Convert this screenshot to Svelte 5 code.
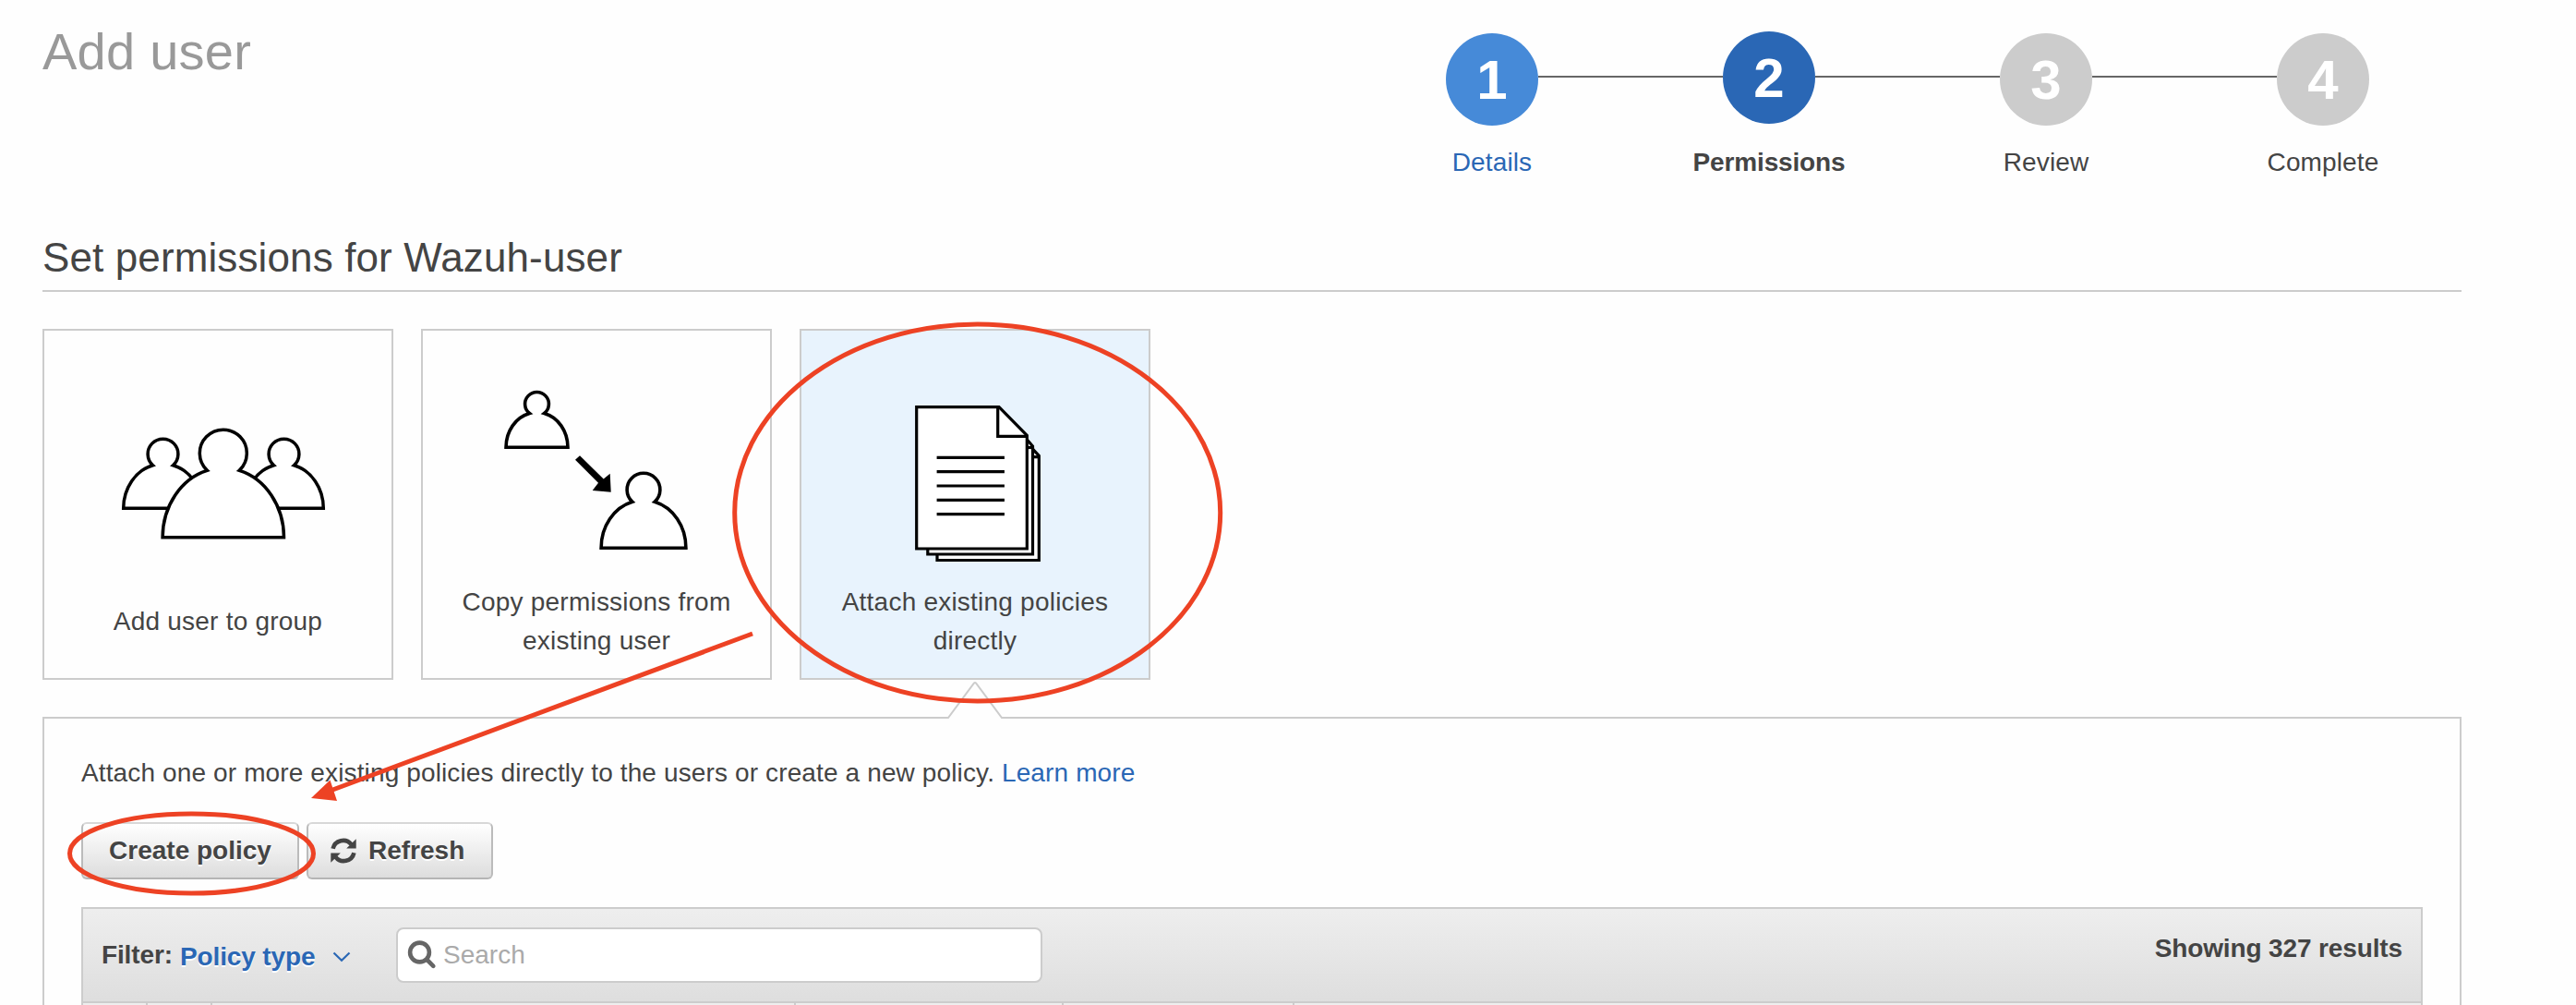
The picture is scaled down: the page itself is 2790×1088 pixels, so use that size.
<script>
  const steps = [
    { n: 1, label: 'Details', state: 'done' },
    { n: 2, label: 'Permissions', state: 'current' },
    { n: 3, label: 'Review', state: 'todo' },
    { n: 4, label: 'Complete', state: 'todo' }
  ];
  const dividers = [70, 70, 632, 290, 250];
</script>

<div class="page">
  <header>
    <h1>Add user</h1>
    <ol class="steps">
      {#each steps as s}
        <li class={s.state}>
          <span class="circle">{s.n}</span>
          <span class="label"><span class="t">{s.label}</span></span>
        </li>
      {/each}
    </ol>
  </header>

  <h2><span>Set permissions for Wazuh-user</span></h2>

  <div class="cards">
    <div class="card">
      <svg class="art" viewBox="0 0 376 256">
        <g fill="#fff" stroke="#000" stroke-width="3.5">
          <path d="M85.700 192.300A42.800 48.200 0 0 1 117.500 145.700A16.400 16.400 0 1 1 139.500 145.700A42.800 48.200 0 0 1 171.300 192.300Z" />
          <path d="M216.700 192.300A42.800 48.200 0 0 1 248.500 145.700A16.400 16.400 0 1 1 270.500 145.700A42.800 48.200 0 0 1 302.300 192.300Z" />
          <path d="M128.100 223.800A65.700 75.400 0 0 1 176.400 151.300A25.500 25.500 0 1 1 211.200 151.300A65.700 75.400 0 0 1 259.500 223.800Z" />
        </g>
      </svg>
      <p class="one"><span>Add user to group</span></p>
    </div>
    <div class="card">
      <svg class="art" viewBox="0 0 376 256">
        <g fill="#fff" stroke="#000" stroke-width="3.600">
          <path d="M90 126.200A33.500 38 0 0 1 115.500 89.500A12.900 12.900 0 1 1 131.500 89.500A33.500 38 0 0 1 157 126.200Z" />
          <path d="M193.100 235.200A45.900 51.600 0 0 1 226.900 185.300A17.900 17.900 0 1 1 251.100 185.300A45.900 51.600 0 0 1 284.900 235.200Z" />
        </g>
        <path d="M170 135.300L165 139.800L190 164.700L183.700 173L203.700 174.700L202.700 154.700L195.700 160.500Z" fill="#000" />
      </svg>
      <p><span>Copy permissions from</span><br /><span>existing user</span></p>
    </div>
    <div class="card selected">
      <svg class="art" viewBox="0 0 376 256">
        <g fill="#fff" stroke="#000" stroke-width="3.2">
          <path d="M147 248.500V150H228L248 125.500L257.300 135.500V248.500Z" />
          <path d="M244 136.700H257.300" />
          <path d="M136.800 242V120H225L240 113L250.500 125V242Z" />
          <path d="M240 126.500H250.500" />
          <path d="M124.700 82.600H214L244.300 113.500V236H124.700Z" />
          <path d="M212.700 82.600V114.300H244.300" fill="none" />
          <path d="M146.600 137.300H219.900M146.600 152.700H219.900M146.600 168H219.900M146.600 183.300H219.900M146.600 198.700H219.900" />
        </g>
      </svg>
      <p><span>Attach existing policies</span><br /><span>directly</span></p>
    </div>
  </div>

  <section class="panel">
    <svg class="pointer" width="62" height="42" viewBox="0 0 62 42">
      <path d="M2 38H60V42H2Z" fill="#fefefe" />
      <path d="M0 39H2L30 1.500Q31 .5 32 1.500L60 39H62" fill="#fefefe" stroke="#ccc" stroke-width="2" />
    </svg>
    <div class="intro"><span>Attach one or more existing policies directly to the users or create a new policy.</span> <a href="#learn">Learn more</a></div>
    <div class="buttons">
      <button class="create">Create policy</button>
      <button class="refresh">
        <svg width="28" height="28" viewBox="0 0 28 28">
          <path d="M2.600 11.700A11.300 11.300 0 0 1 22.500 7.200M25.400 16.300A11.300 11.300 0 0 1 5.500 20.800" fill="none" stroke="#444" stroke-width="4.600" />
          <path d="M27.700 1.300V11.400H17.200ZM.3 26.700V16.600H10.800Z" fill="#444" />
        </svg>
        <span>Refresh</span>
      </button>
    </div>
    <div class="table">
      <div class="bar">
        <b class="filter">Filter:</b>
        <b class="type">Policy type</b>
        <svg class="chev" width="20" height="12" viewBox="0 0 20 12"><path d="M1.500 1.500L10 9.800L18.500 1.500" fill="none" stroke="#2a67b5" stroke-width="2.200" /></svg>
        <div class="search">
          <svg width="32" height="32" viewBox="0 0 32 32"><g fill="none" stroke="#666" stroke-width="4.600"><circle cx="13.500" cy="13" r="10.400" /><path d="M21.500 21L28.300 27.800" stroke-linecap="round" /></g></svg>
          <span>Search</span>
        </div>
        <b class="count">Showing 327 results</b>
      </div>
      <div class="cols">
        {#each dividers as w}
          <i style="width: {w}px"></i>
        {/each}
      </div>
    </div>
  </section>

  <svg class="marks" width="2790" height="1088" viewBox="0 0 2790 1088">
    <g fill="none" stroke="#ed4224" stroke-width="5">
      <ellipse cx="1058.700" cy="555" rx="263" ry="204" />
      <ellipse cx="207.500" cy="924" rx="132" ry="43" />
      <path d="M815 686L355 857" />
    </g>
    <path d="M337 864L357.500 844.500L365 867Z" fill="#ed4224" />
  </svg>
</div>

<style>
  :global(body) { background: #fefefe; overflow: hidden; }
  .page {
    position: relative; box-sizing: border-box; width: 2790px; height: 1088px; overflow: hidden;
    padding: 0 124px 0 46px; background: #fefefe; color: #444;
    font: 28px/42px "Liberation Sans", Arial, sans-serif;
  }
  header { display: flex; justify-content: space-between; height: 240px; }
  h1 { margin: 23px 0 0; font-size: 56px; line-height: 66px; font-weight: 400; letter-spacing: 0.25px; color: #999; }
  .steps { display: flex; list-style: none; margin: 34px 0 0; padding: 0; height: 180px; }
  li { width: 300px; display: flex; flex-direction: column; align-items: center; position: relative; }
  li:not(:last-child)::after {
    content: ""; position: absolute; left: 200px; top: 48px; width: 200px; height: 2px; background: #666;
  }
  .circle {
    width: 100px; height: 100px; border-radius: 50%; margin-top: 2px; box-sizing: border-box;
    font-size: 60px; line-height: 102px; font-weight: 700; text-align: center; color: #fff; background: #ccc;
  }
  .label { margin-top: 19px; letter-spacing: 0.13px; }
  .done .circle { background: #468ad8; }
  .done .label { color: #2a67b5; }
  .current .circle { background: #2a67b5; margin-top: 0; }
  .current .label { font-weight: 700; margin-top: 21px; letter-spacing: -0.15px; }
  h2 {
    margin: 0; height: 74px; border-bottom: 2px solid #ccc; font-size: 44px; line-height: 78px; font-weight: 400;
    letter-spacing: 0.12px;
  }
  .cards { display: flex; gap: 30px; margin-top: 40px; }
  .card {
    box-sizing: border-box; width: 380px; height: 380px; border: 2px solid #ccc; text-align: center;
    display: flex; flex-direction: column;
  }
  .selected { background: #e8f3fd; }
  .art { width: 376px; height: 256px; flex: none; }
  .card p { margin: 17px 0 0; letter-spacing: 0.22px; }
  .card p.one { margin-top: 38px; }
  .panel {
    position: relative; box-sizing: border-box; height: 330px; margin-top: 40px; padding: 38px 40px 0;
    border: 2px solid #ccc;
  }
  .pointer { position: absolute; left: 977px; top: -40px; }
  a { color: #2a67b5; text-decoration: none; }
  .intro { height: 74px; letter-spacing: 0.13px; }
  .buttons { display: flex; gap: 8px; height: 92px; }
  button {
    box-sizing: border-box; height: 62px; padding: 0; border: 2px solid #bbb; border-top-color: #d8d8d8; border-bottom-color: #b5b5b5;
    border-radius: 6px; background: linear-gradient(#fff, #ddd); color: #444; font: 700 28px/58px "Liberation Sans", Arial, sans-serif;
    text-shadow: 0 2px 0 #fff; display: flex; align-items: center; justify-content: center;
  }
  .create { width: 236px; }
  .refresh { width: 202px; gap: 13px; justify-content: flex-start; padding-left: 24px; }
  .table { border: 2px solid #ccc; height: 120px; }
  .bar {
    height: 100px; display: flex; align-items: flex-start; background: linear-gradient(#eee, #dedede);
    border-bottom: 2px solid #ccc; padding: 0 20px; letter-spacing: -0.13px;
  }
  .filter { margin-top: 29px; width: 85px; white-space: nowrap; }
  .type { margin-top: 31px; width: 165px; color: #2a67b5; text-shadow: 0 2px 0 #fff; white-space: nowrap; }
  .chev { margin-top: 46px; }
  .search {
    box-sizing: border-box; width: 700px; height: 60px; margin: 20px 0 0 49px; border: 2px solid #ccc; border-radius: 8px;
    background: #fff; color: #aaa; display: flex; align-items: center; padding-left: 10px; gap: 7px; letter-spacing: 0;
  }
  .count { margin: 22px 0 0 auto; white-space: nowrap; }
  .cols { display: flex; height: 20px; background: #eee; }
  .cols i { box-sizing: border-box; border-right: 2px solid #ccc; }
  .marks { position: absolute; left: 0; top: 0; pointer-events: none; }
</style>
